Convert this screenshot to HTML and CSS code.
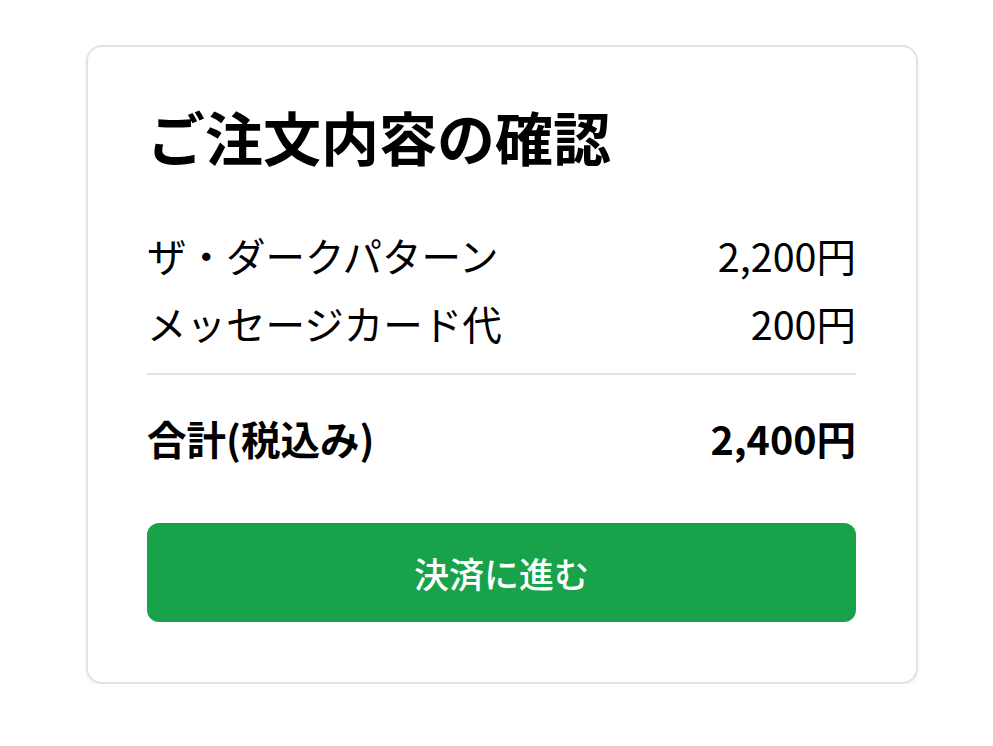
FILE: index.html
```html
<!DOCTYPE html>
<html lang="ja">
<head>
<meta charset="utf-8">
<link rel="stylesheet" href="styles.css">
</head>
<body>
<div class="card">
  <h1 class="title">ご注文内容の確認</h1>
  <div class="items">
    <div class="row"><span>ザ・ダークパターン</span><span>2,200円</span></div>
    <div class="row"><span>メッセージカード代</span><span>200円</span></div>
  </div>
  <div class="total"><span>合計(税込み)</span><span>2,400円</span></div>
  <button class="pay">決済に進む</button>
</div>
</body>
</html>
```
FILE: styles.css
```css
html, body {
  margin: 0;
  background: #fff;
}
body {
  font-family: "Noto Sans CJK JP", "Noto Sans", sans-serif;
  color: #000;
  padding: 45px 0 0 86px;
}
.card {
  box-sizing: border-box;
  width: 832px;
  border: 2px solid #e3e3e3;
  border-radius: 16px;
  padding: 55px 60px 60px 59px;
  box-shadow: 0 2px 4px rgba(0,0,0,0.06);
}
.title {
  margin: 0 0 49px;
  font-size: 58px;
  font-weight: 700;
  line-height: 1.2;
}
.items {
  border-bottom: 2px solid #e3e3e3;
  padding-bottom: 16px;
}
.row {
  display: flex;
  justify-content: space-between;
  font-size: 39.5px;
  line-height: 68px;
}
.total {
  display: flex;
  justify-content: space-between;
  font-size: 39.5px;
  font-weight: 700;
  line-height: 68px;
  margin-top: 29px;
}
.pay {
  display: block;
  width: 100%;
  height: 99px;
  margin-top: 51px;
  border: none;
  border-radius: 12px;
  background: #18a34a;
  color: #fff;
  font-family: inherit;
  font-size: 35px;
  font-weight: 500;
}
```
